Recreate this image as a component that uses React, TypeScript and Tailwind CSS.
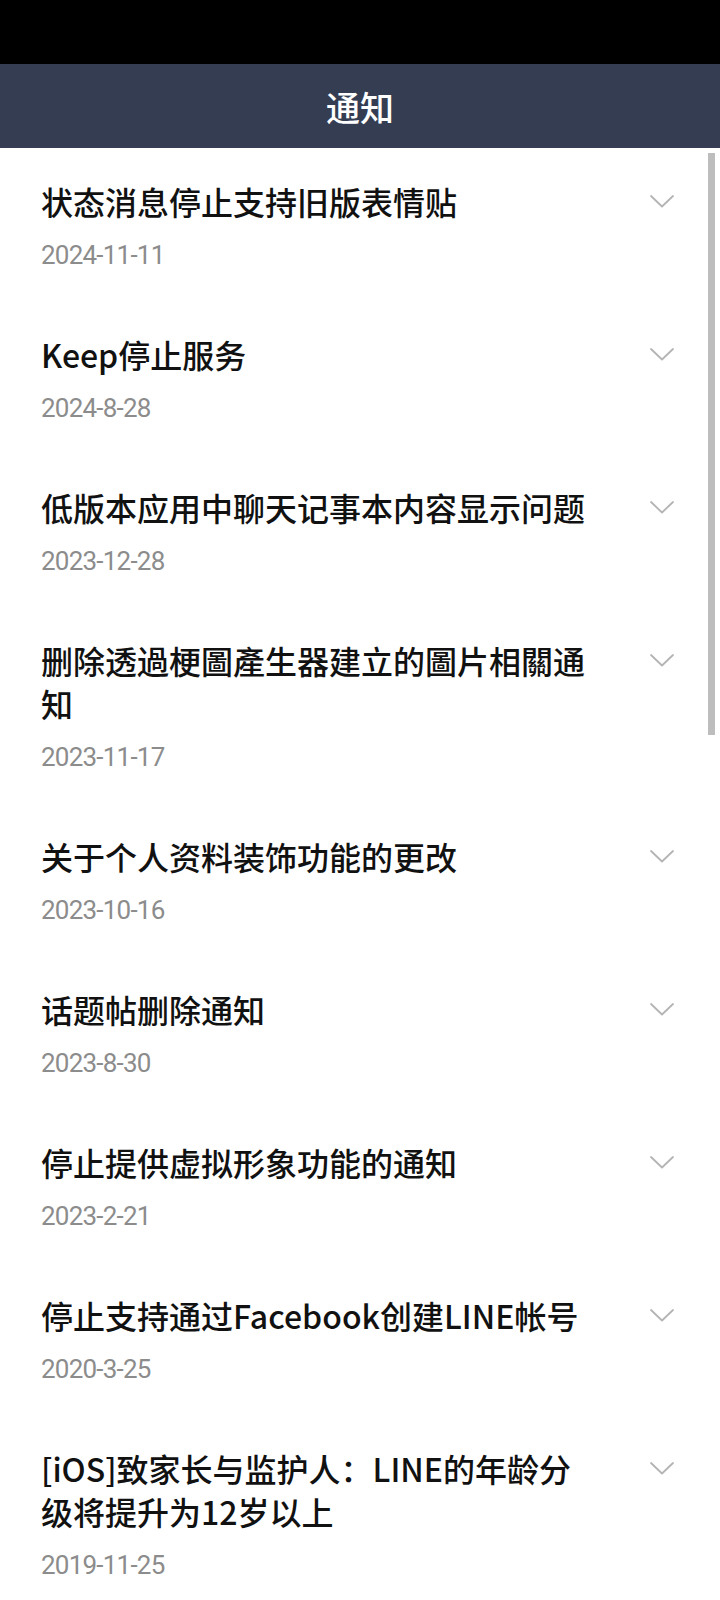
import React from 'react';

type Notice = { title: string; date: string };

const notices: Notice[] = [
  { title: '状态消息停止支持旧版表情贴', date: '2024-11-11' },
  { title: 'Keep停止服务', date: '2024-8-28' },
  { title: '低版本应用中聊天记事本内容显示问题', date: '2023-12-28' },
  { title: '删除透過梗圖產生器建立的圖片相關通知', date: '2023-11-17' },
  { title: '关于个人资料装饰功能的更改', date: '2023-10-16' },
  { title: '话题帖删除通知', date: '2023-8-30' },
  { title: '停止提供虚拟形象功能的通知', date: '2023-2-21' },
  { title: '停止支持通过Facebook创建LINE帐号', date: '2020-3-25' },
  { title: '[iOS]致家长与监护人：LINE的年龄分\n级将提升为12岁以上', date: '2019-11-25' },
];

const Chevron = () => (
  <svg width="24" height="13" viewBox="0 0 24 13" fill="none" className="shrink-0">
    <polyline points="1,1 12,11.5 23,1" stroke="#b4b4b4" strokeWidth="1.8" strokeLinejoin="round" strokeLinecap="round" />
  </svg>
);

function NoticeRow({ notice }: { notice: Notice }) {
  return (
    <div className="flex items-start pl-[41px] pr-[45px] pt-[32px] pb-[29px]">
      <div className="w-[560px] min-w-0">
        <div className="whitespace-pre-line text-[32px] leading-[43px] font-medium text-[#111111]">
          {notice.title}
        </div>
        <div className="mt-[15px] text-[26px] leading-[34px] tracking-[-0.03em] text-[#8c8c8c] font-['Roboto','Noto_Sans',sans-serif]">
          {notice.date}
        </div>
      </div>
      <div className="ml-auto mt-[15px] mr-[1px]">
        <Chevron />
      </div>
    </div>
  );
}

export default function App() {
  return (
    <div className="relative w-[720px] h-[1600px] overflow-hidden bg-white font-['Noto_Sans','Noto_Sans_CJK_SC',sans-serif]">
      <div className="h-[64px] bg-black" />
      <div className="h-[84px] bg-[#343d52] flex items-center justify-center">
        <span className="text-[34px] font-medium text-white font-['Noto_Sans_CJK_SC',sans-serif]">通知</span>
      </div>
      <div className="flex flex-col font-['Noto_Sans_CJK_SC',sans-serif]">
        {notices.map((n) => (
          <NoticeRow key={n.date + n.title} notice={n} />
        ))}
      </div>
      <div className="absolute left-[708px] top-[153px] w-[7px] h-[582px] bg-[#bdbdbd]" />
    </div>
  );
}
